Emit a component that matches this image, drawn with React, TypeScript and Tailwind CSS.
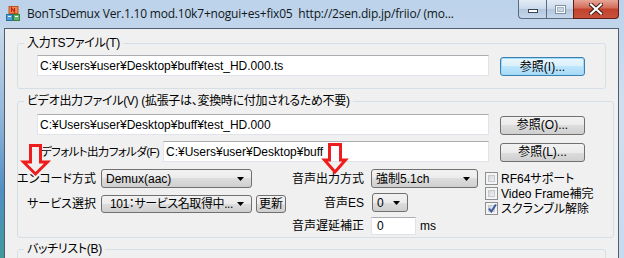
import React from "react";

const jp =
  "font-['Liberation_Sans','Noto_Sans_CJK_JP',sans-serif] [font-feature-settings:'palt'] text-[12px] leading-[14px] text-black whitespace-nowrap";

const face =
  "rounded-[3px] border border-[#707070] bg-[linear-gradient(#f2f2f2,#ebebeb_50%,#dddddd_50%,#cfcfcf)]";

function Button({ label, className = "", primary = false }: { label: string; className?: string; primary?: boolean }) {
  const look = primary
    ? "rounded-[3px] border border-[#3c7fb1] bg-[linear-gradient(#eaf6fd,#d9f0fc_50%,#bee6fd_50%,#a7d9f5)] shadow-[inset_0_0_0_1px_#9fdaf8]"
    : face;
  return <div className={`flex shrink-0 items-center justify-center ${look} ${className}`}>{label}</div>;
}

function TextBox({ value, className = "" }: { value: string; className?: string }) {
  return (
    <div
      className={`flex shrink-0 items-center overflow-hidden border border-[#e2e3ea] border-t-[#abadb3] bg-white pl-[2px] ${className}`}
    >
      <span>{value}</span>
    </div>
  );
}

function Combo({ value, className = "" }: { value: string; className?: string }) {
  return (
    <div className={`flex shrink-0 items-center pl-[4px] pr-[7px] ${face} ${className}`}>
      <span className="flex-1 overflow-hidden">{value}</span>
      <svg width="7" height="4" viewBox="0 0 7 4" className="ml-[4px] shrink-0">
        <path d="M0 0h7L3.5 4z" fill="#000" />
      </svg>
    </div>
  );
}

function Label({ text }: { text: string }) {
  return (
    <div className="flex w-[78px] shrink-0 justify-end">
      <span className="shrink-0">{text}</span>
    </div>
  );
}

function Check({ label, checked = false }: { label: string; checked?: boolean }) {
  return (
    <div className="flex h-[15px] items-center gap-[3px]">
      <div className="relative h-[13px] w-[13px] shrink-0 border border-[#8e8f8f] bg-[#f4f4f4] p-[2px]">
        <div className="h-full w-full border border-[#c6c9ce] bg-[linear-gradient(135deg,#d3d6da,#f1f1f2)]" />
        {checked && (
          <svg width="11" height="11" viewBox="0 0 11 11" className="absolute left-[1px] top-[0px]">
            <path d="M2 5.5l2.3 3L9 1.5" stroke="#3c5a9a" strokeWidth="2" fill="none" />
          </svg>
        )}
      </div>
      <span>{label}</span>
    </div>
  );
}

function Group({ title, children, className = "" }: { title: string; children: React.ReactNode; className?: string }) {
  return (
    <fieldset className={`rounded-[3px] border border-[#d5dfe5] ${className}`}>
      <legend className="ml-[6px] px-[3px] leading-[14px] tracking-[-0.3px]">{title}</legend>
      {children}
    </fieldset>
  );
}

function AppIcon() {
  return (
    <svg width="14" height="15" viewBox="0 0 14 15" className="mt-[6px] ml-[6px] shrink-0">
      <rect x="3" y="0.5" width="9" height="7" fill="#f08a4b" stroke="#b8552a" />
      <path d="M5.5 6V2l3 4V2" stroke="#c0201a" strokeWidth="1.2" fill="none" />
      <rect x="0.5" y="8.5" width="6" height="6" fill="#4aa3d8" stroke="#2b6e9e" />
      <rect x="7.5" y="8.5" width="6" height="6" fill="#62b86a" stroke="#3b8040" />
      <path d="M2 10.5h3M9 10.5h3" stroke="#fff" />
    </svg>
  );
}

function CaptionButtons() {
  return (
    <div className="mr-[5px] flex h-[19px] shrink-0">
      <div className="flex w-[28px] items-center justify-center rounded-bl-[4px] border border-r-0 border-t-0 border-[#5b6b82] bg-[linear-gradient(#e3ecf6,#c9d8ea_50%,#b3c6dd_50%,#c6d7ea)]">
        <div className="mt-[4px] h-[4px] w-[10px] border border-[#3a4657] bg-white" />
      </div>
      <div className="flex w-[27px] items-center justify-center border-b border-l border-[#5b6b82] bg-[linear-gradient(#e3ecf6,#c9d8ea_50%,#b3c6dd_50%,#c6d7ea)]">
        <div className="h-[9px] w-[11px] border border-[#7f8fa3] bg-[#c9d6e6] shadow-[inset_0_0_0_1px_#ffffff,inset_0_0_0_2px_#a7b5c6]" />
      </div>
      <div className="flex w-[46px] items-center justify-center rounded-br-[4px] border border-t-0 border-[#5e1f18] bg-[linear-gradient(#e6a596,#d36b58_45%,#c2412c_50%,#c9523a)]">
        <svg width="14" height="12" viewBox="0 0 14 12">
          <path d="M2 1.5l10 9M12 1.5l-10 9" stroke="#3b1712" strokeWidth="4" strokeLinecap="square" />
          <path d="M2 1.5l10 9M12 1.5l-10 9" stroke="#ffffff" strokeWidth="2.2" strokeLinecap="square" />
        </svg>
      </div>
    </div>
  );
}

function RedArrow({ className, pts }: { className: string; pts: string }) {
  return (
    <svg width="32" height="38" viewBox="0 0 32 38" className={`absolute ${className}`}>
      <polygon points={pts} fill="none" stroke="#ee1c1c" strokeWidth="3" strokeLinejoin="miter" />
    </svg>
  );
}

export default function App() {
  return (
    <div className={`relative h-[258px] w-[624px] overflow-hidden bg-[linear-gradient(#bcd2ea,#cfdfef_40%,#c7daee)] ${jp}`}>
      {/* title bar */}
      <div className="flex h-[28px] items-start">
        <AppIcon />
        <div className="mt-[6px] ml-[7px] flex-1 truncate font-['Open_Sans',sans-serif] text-[12px] leading-[16px] tracking-[-0.2px] text-[#101820]">
          BonTsDemux Ver.1.10 mod.10k7+nogui+es+fix05&nbsp;&nbsp;http://2sen.dip.jp/friio/ (mo...
        </div>
        <div className="w-[14px]" />
        <CaptionButtons />
      </div>

      <div className="flex">
        <div className="h-[230px] w-[4px] bg-[linear-gradient(#c9d9ea,#8fb4d8_40%,#4f8fc4_70%,#3f9a9a)]" />
        <div className="h-[230px] w-[615px] border-x border-t border-[#4e5d72] bg-[#f0f0f0] px-[12px] pt-[7px]">
          <Group title="入力TSファイル(T)">
            <div className="flex items-center gap-[11px] pt-[5px] pb-[12px] pl-[19px] pr-[20px]">
              <TextBox className="h-[21px] w-[452px]" value="C:¥Users¥user¥Desktop¥buff¥test_HD.000.ts" />
              <Button primary className="mt-[2px] h-[19px] w-[85px]" label="参照(I)..." />
            </div>
          </Group>

          <Group className="mt-[5px]" title="ビデオ出力ファイル(V) (拡張子は、変換時に付加されるため不要)">
            <div className="pt-[6px] pb-[2px] pl-[19px] pr-[20px]">
              <div className="flex items-center gap-[11px]">
                <TextBox className="h-[21px] w-[452px]" value="C:¥Users¥user¥Desktop¥buff¥test_HD.000" />
                <Button className="mt-[1px] h-[19px] w-[85px]" label="参照(O)..." />
              </div>
              <div className="mt-[6px] flex items-center gap-[11px]">
                <span className="w-[115px] shrink-0 pl-[4px] text-[11.5px] tracking-[-0.6px]">デフォルト出力フォルダ(F)</span>
                <TextBox className="h-[21px] w-[326px]" value="C:¥Users¥user¥Desktop¥buff" />
                <Button className="mt-[1px] h-[19px] w-[85px]" label="参照(L)..." />
              </div>

              <div className="-ml-[19px] mt-[7px] flex">
                <div className="w-[268px] shrink-0">
                  <div className="flex h-[19px] items-center">
                    <Label text="エンコード方式" />
                    <Combo className="ml-[5px] h-[19px] w-[151px]" value="Demux(aac)" />
                  </div>
                  <div className="mt-[7px] flex h-[18px] items-center">
                    <Label text="サービス選択" />
                    <Combo className="ml-[5px] h-[18px] w-[151px] pl-[8px] tracking-[-0.4px]" value="101：サービス名取得中..." />
                    <Button className="ml-[4px] h-[18px] w-[30px]" label="更新" />
                  </div>
                </div>
                <div className="w-[199px] shrink-0">
                  <div className="flex h-[19px] items-center">
                    <Label text="音声出力方式" />
                    <Combo className="ml-[7px] h-[19px] w-[107px]" value="強制5.1ch" />
                  </div>
                  <div className="mt-[5px] flex h-[19px] items-center">
                    <Label text="音声ES" />
                    <Combo className="ml-[8px] h-[19px] w-[36px] pl-[3px] pr-[5px]" value="0" />
                  </div>
                  <div className="mt-[5px] flex h-[18px] items-center">
                    <Label text="音声遅延補正" />
                    <TextBox className="ml-[7px] h-[18px] w-[45px] pl-[5px]" value="0" />
                    <span className="ml-[4px]">ms</span>
                  </div>
                </div>
                <div className="mt-[2px] shrink-0">
                  <Check label="RF64サポート" />
                  <Check label="Video Frame補完" />
                  <Check label="スクランブル解除" checked />
                </div>
              </div>
            </div>
          </Group>

          <Group className="mt-[4px] h-[30px]" title="バッチリスト(B)">
            <div />
          </Group>
        </div>
        <div className="h-[230px] w-[5px]" />
      </div>

      <RedArrow className="left-[20px] top-[142px]" pts="10.5,3.5 20.5,3.5 20.5,20 27.5,20 15.5,32 3.5,20 10.5,20" />
      <RedArrow className="left-[320px] top-[141px]" pts="9.5,3.5 20.5,3.5 20.5,19 25.5,19 15,31 4.5,19 9.5,19" />
    </div>
  );
}
